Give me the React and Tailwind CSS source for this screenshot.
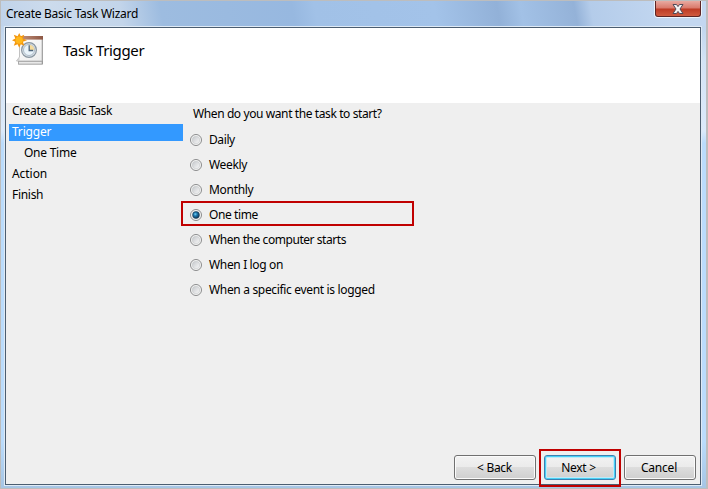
import React from "react";

const steps = [
  { label: "Create a Basic Task", cls: "pl-[3px] tracking-[-0.35px]" },
  { label: "Trigger", cls: "pl-[3px] bg-[#3399ff] text-white tracking-[-0.2px]" },
  { label: "One Time", cls: "pl-[15px] tracking-[-0.25px]" },
  { label: "Action", cls: "pl-[3px] tracking-[-0.05px]" },
  { label: "Finish", cls: "pl-[3px] tracking-[-0.3px]" },
];

const options = [
  { label: "Daily", cls: "tracking-[-0.4px]" },
  { label: "Weekly", cls: "tracking-[-0.35px]" },
  { label: "Monthly", cls: "tracking-[-0.3px]" },
  { label: "One time", cls: "tracking-[-0.4px]", checked: true },
  { label: "When the computer starts", cls: "tracking-[-0.44px]" },
  { label: "When I log on", cls: "tracking-[-0.35px]" },
  { label: "When a specific event is logged", cls: "tracking-[-0.33px]" },
];

function TaskIcon() {
  return (
    <svg className="block h-[34px] w-[34px] shrink-0" viewBox="0 0 34 34">
      <defs>
        <linearGradient id="paper" x1="0" y1="0" x2="1" y2="1">
          <stop offset="0" stopColor="#ffffff" />
          <stop offset="1" stopColor="#ececec" />
        </linearGradient>
        <linearGradient id="bind" x1="0" y1="0" x2="1" y2="0">
          <stop offset="0" stopColor="#c4917a" />
          <stop offset="1" stopColor="#8d5744" />
        </linearGradient>
      </defs>
      <path d="M6 31.500h25V5l-1-1v24H6z" fill="#9b9b9b" />
      <path d="M6.500 28.500h23.500v2.500H6.500z" fill="#e9e9e9" stroke="#9a9a9a" strokeWidth=".6" />
      <path d="M7.500 5H30v23H4.500L7.500 24z" fill="url(#paper)" stroke="#b2b2b2" strokeWidth=".8" />
      <path d="M4.500 28l3-4v4z" fill="#d0d0d0" />
      <rect x="8" y="3" width="23" height="3.600" fill="url(#bind)" />
      <circle cx="17" cy="17" r="7.400" fill="#dce2e7" stroke="#8996a1" strokeWidth="1.200" />
      <circle cx="17" cy="17" r="5.500" fill="#eaf4fb" stroke="#9fb0bf" strokeWidth=".8" />
      <path d="M17.500 11.700a5.300 5.300 0 0 1 4.900 5.300h-4.900z" fill="#f6dc9c" />
      <path d="M17.200 12.300v5.200h4" fill="none" stroke="#4e657c" strokeWidth="1.300" />
      <path d="M7.200 0l1.600 3.300L12.300 1.800l-1.400 3.600L15 7.200l-4.100 1.600 1.400 3.900-3.500-1.500L7.200 14.800 5.600 11.200 1.800 12.700l1.500-3.900L0 7.200l3.300-1.800L1.800 1.800l3.800 1.500z" fill="#f3970f" />
      <circle cx="7.200" cy="7.200" r="3.600" fill="#ffb81c" />
    </svg>
  );
}

function Radio({ checked }) {
  return (
    <svg className="mr-[7px] mt-px block h-[12px] w-[12px] shrink-0" viewBox="0 0 12 12">
      <defs>
        <linearGradient id="radioFace" x1="0" y1="0" x2="1" y2="1">
          <stop offset="0" stopColor="#c3c6ca" />
          <stop offset="1" stopColor="#fafafa" />
        </linearGradient>
        <radialGradient id="radioDot" cx=".4" cy=".38" r=".65">
          <stop offset="0" stopColor="#72d2f5" />
          <stop offset=".4" stopColor="#1d77ad" />
          <stop offset="1" stopColor="#0b3152" />
        </radialGradient>
      </defs>
      <circle cx="6" cy="6" r="5.500" fill="#f8f8f8" stroke="#8a8b8c" strokeWidth="1" />
      <circle cx="6" cy="6" r="3.800" fill="url(#radioFace)" stroke="#c4c7ca" strokeWidth=".6" />
      {checked && <circle cx="6" cy="6" r="3.400" fill="url(#radioDot)" stroke="#14364f" strokeWidth=".5" />}
    </svg>
  );
}

const face = "bg-[linear-gradient(#f2f2f2_0%,#ebebeb_49%,#dddddd_50%,#cfcfcf_100%)]";

export default function App() {
  return (
    <div className="relative flex h-[489px] w-[708px] flex-col overflow-hidden border-t border-r-2 border-b border-l border-[#bdbdbd] bg-[linear-gradient(#b5cde9_0px,#d3e3f5_60px,#dceafa_130px,#bbdcfc_142px,#bbdcfc_440px,#a6c5e4_487px)] font-['Noto_Sans','Open_Sans',sans-serif] text-[12px] text-black">
      <header className="flex h-[25px] shrink-0 justify-between bg-[linear-gradient(80deg,#c0d3ea_0px,#ccdbec_50px,#c3d5ea_120px,#9dbce0_160px,#97b8e0_290px,#a1c1e7_312px,#a3c3e9_430px,#92b1d8_492px,#a2c1e6_515px,#94b2d8_568px,#b4ccea_584px,#c3d7f0_660px)] pl-[5px] pr-[4px]">
        <span className="h-[25px] leading-[25px] tracking-[-0.28px]">Create Basic Task Wizard</span>
        <div className="flex h-[17px] w-[48px] justify-center rounded-b-[4px] border border-t-0 border-[#edf3fa]">
          <div className="flex h-[16px] w-[46px] items-center justify-center rounded-b-[3px] border border-t-0 border-[#5d2525] bg-[linear-gradient(#e8aaa1_0px,#d9796b_7px,#bd3b25_8px,#cf5b40_15px)]">
            <svg className="block h-[12px] w-[12px]" viewBox="0 0 12 12">
              <path d="M1 1.500h3.500L6 3.600l1.500-2.100H11L8 6l3 4.500H7.500L6 8.400l-1.500 2.100H1L4 6z" fill="#f4f4f4" stroke="#514a58" strokeWidth="1" />
            </svg>
          </div>
        </div>
      </header>
      <main className="ml-[3px] flex h-[460px] w-[698px] shrink-0 flex-col border border-[#dfeaf5]">
        <div className="flex min-h-0 flex-1 flex-col border border-[#4b5d70] bg-[#efefef]">
          <div className="flex h-[75px] shrink-0 bg-white pl-[6px] pt-[5px]">
            <TaskIcon />
            <h1 className="ml-[17px] mt-[5px] h-[24px] text-[15px] leading-[24px] tracking-[-0.34px]">Task Trigger</h1>
          </div>
          <div className="flex min-h-0 flex-1">
            <nav className="ml-[3px] flex w-[174px] shrink-0 flex-col gap-1">
              {steps.map((s) => (
                <div key={s.label} className={"h-[17px] whitespace-nowrap leading-[16px] " + s.cls}>{s.label}</div>
              ))}
            </nav>
            <section className="ml-[-2px] flex flex-col">
              <p className="h-[24px] pl-[12px] leading-[22px] tracking-[-0.4px]">When do you want the task to start?</p>
              {options.map((o) => (
                <label key={o.label} className={"flex h-[25px] w-[233px] items-center whitespace-nowrap " + (o.checked ? "-mt-px mb-px border-2 border-[#c00000] pl-[7px] pt-[2px] " : "pl-[9px] ") + o.cls}>
                  <Radio checked={o.checked} />
                  <span className="leading-[16px]">{o.label}</span>
                </label>
              ))}
            </section>
          </div>
          <footer className="flex h-[29px] shrink-0 justify-end gap-2 pr-[4px]">
            <button className={"h-[25px] w-[82px] rounded-[3px] border border-[#707070] pr-px shadow-[inset_0_0_0_1px_#fbfbfb] tracking-[-0.3px] " + face}>&lt; Back</button>
            <div className="relative">
              <button className={"h-[25px] w-[72px] rounded-[3px] border border-[#3c7fb1] pr-[3px] shadow-[inset_0_0_0_1px_#48d0f5,inset_0_0_0_2px_#c0e9f7] tracking-[-0.3px] " + face}>Next &gt;</button>
              <div className="absolute -left-[5px] -top-[6px] h-[38px] w-[82px] border-2 border-[#c00000]" />
            </div>
            <button className={"h-[25px] w-[72px] rounded-[3px] border border-[#707070] pr-[2px] shadow-[inset_0_0_0_1px_#fbfbfb] tracking-[-0.2px] " + face}>Cancel</button>
          </footer>
        </div>
      </main>
    </div>
  );
}
